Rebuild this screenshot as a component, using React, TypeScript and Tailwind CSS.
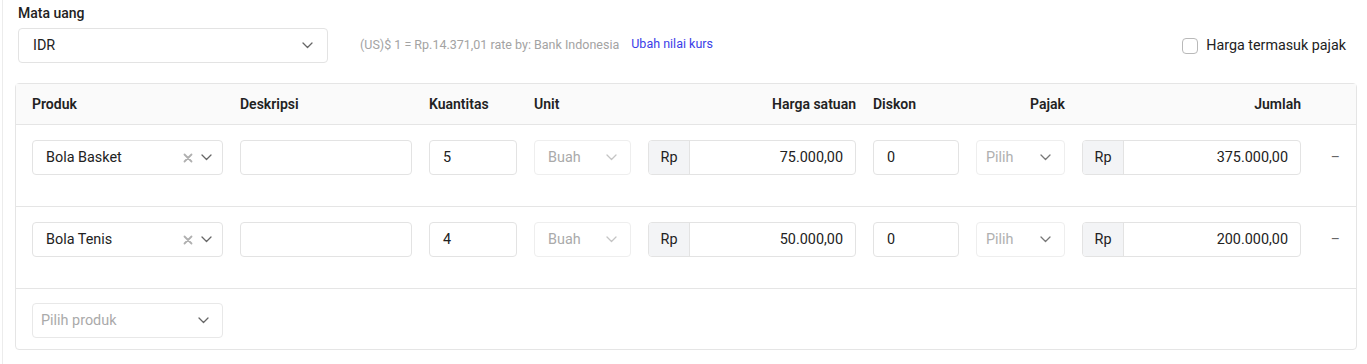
import { useState } from 'react';

interface Item {
  id: number;
  produk: string;
  qty: string;
  harga: string;
  jumlah: string;
}

const items: Item[] = [
  { id: 1, produk: 'Bola Basket', qty: '5', harga: '75.000,00', jumlah: '375.000,00' },
  { id: 2, produk: 'Bola Tenis', qty: '4', harga: '50.000,00', jumlah: '200.000,00' },
];

const Chevron = ({ className = '' }: { className?: string }) => (
  <svg width="11" height="7" viewBox="0 0 11 7" fill="none" className={className}>
    <path d="M1 1l4.5 4.5L10 1" stroke="currentColor" strokeWidth="1.3" strokeLinecap="round" strokeLinejoin="round" />
  </svg>
);

const Cross = () => (
  <svg width="10" height="10" viewBox="0 0 10 10" fill="none" className="text-[#b0b0b0]">
    <path d="M1.5 1.5l7 7M8.5 1.5l-7 7" stroke="currentColor" strokeWidth="1.8" strokeLinecap="round" />
  </svg>
);

const MoneyInput = ({ value }: { value: string }) => (
  <div className="flex h-[35px] rounded border border-[#e3e3e3] overflow-hidden">
    <div className="w-[41px] shrink-0 flex items-center justify-center bg-[#f3f4f6] border-r border-[#e3e3e3] text-[14.4px] text-[#222]">
      Rp
    </div>
    <div className="flex-1 flex items-center justify-end pr-[12px] text-[14.4px] text-[#222]">{value}</div>
  </div>
);

const App = () => {
  const [inclTax, setInclTax] = useState(false);

  return (
    <div className="min-h-screen bg-white ml-[2px] border-l border-[#ececec] font-['Roboto',_sans-serif] text-[#222]">
      <div className="pl-[15px] pr-[10px] pt-[4px]">
        <div className="text-[14px] font-medium leading-[18px] mb-[6px]">Mata uang</div>
        <div className="flex items-center">
          <div className="w-[310px] h-[35px] rounded border border-[#e3e3e3] flex items-center justify-between pl-[14px] pr-[14px]">
            <span className="text-[14.4px]">IDR</span>
            <Chevron className="text-[#666]" />
          </div>
          <span className="ml-[32px] text-[12.5px] text-[#a3a3a3]">(US)$ 1 = Rp.14.371,01 rate by: Bank Indonesia</span>
          <a className="ml-[12px] text-[12.5px] text-[#3b40e8] -mt-[2px]">Ubah nilai kurs</a>
          <label className="ml-auto flex items-center gap-[8px] mr-[11px]" onClick={() => setInclTax(!inclTax)}>
            <span className="w-[16px] h-[16px] rounded-[4px] border border-[#b9b9b9] bg-white" />
            <span className="text-[14.3px] text-[#222]">Harga termasuk pajak</span>
          </label>
        </div>

        <div className="mt-[20px] w-[1342px] -ml-[3px] rounded border border-[#e5e5e5]">
          <div className="grid grid-cols-[191px_172px_88px_97px_208px_86px_89px_219px_1fr] gap-x-[17px] px-[16px] h-[41px] items-center bg-[#fafafa] border-b border-[#e5e5e5] text-[14px] font-semibold">
            <div>Produk</div>
            <div>Deskripsi</div>
            <div>Kuantitas</div>
            <div>Unit</div>
            <div className="text-right">Harga satuan</div>
            <div>Diskon</div>
            <div className="text-right">Pajak</div>
            <div className="text-right">Jumlah</div>
            <div />
          </div>

          {items.map((item) => (
            <div
              key={item.id}
              className="grid grid-cols-[191px_172px_88px_97px_208px_86px_89px_219px_1fr] gap-x-[17px] px-[16px] pt-[15px] pb-[31px] border-b border-[#e5e5e5] items-start"
            >
              <div className="h-[35px] rounded border border-[#e3e3e3] flex items-center pl-[13px] pr-[10px] text-[14.4px]">
                <span className="flex-1">{item.produk}</span>
                <Cross />
                <Chevron className="ml-[8px] text-[#666]" />
              </div>
              <div className="h-[35px] rounded border border-[#e3e3e3]" />
              <div className="h-[35px] rounded border border-[#e3e3e3] flex items-center pl-[13px] text-[14.4px]">{item.qty}</div>
              <div className="h-[35px] rounded border border-[#eeeeee] flex items-center justify-between pl-[13px] pr-[13px] text-[14.4px] text-[#aaa]">
                <span>Buah</span>
                <Chevron className="text-[#c4c4c4]" />
              </div>
              <MoneyInput value={item.harga} />
              <div className="h-[35px] rounded border border-[#e3e3e3] flex items-center pl-[13px] text-[14.4px]">0</div>
              <div className="h-[35px] rounded border border-[#eeeeee] flex items-center justify-between pl-[9px] pr-[13px] text-[14.4px] text-[#b0b0b0]">
                <span>Pilih</span>
                <Chevron className="text-[#777]" />
              </div>
              <MoneyInput value={item.jumlah} />
              <div className="h-[35px] flex items-center justify-end text-[14px] text-[#666]">–</div>
            </div>
          ))}

          <div className="px-[16px] pt-[14px] pb-[11px]">
            <div className="w-[191px] h-[35px] rounded border border-[#e8e8e8] flex items-center justify-between pl-[8px] pr-[13px] text-[14.4px] text-[#aaa]">
              <span>Pilih produk</span>
              <Chevron className="text-[#666]" />
            </div>
          </div>
        </div>
      </div>
    </div>
  );
};

export default App;
